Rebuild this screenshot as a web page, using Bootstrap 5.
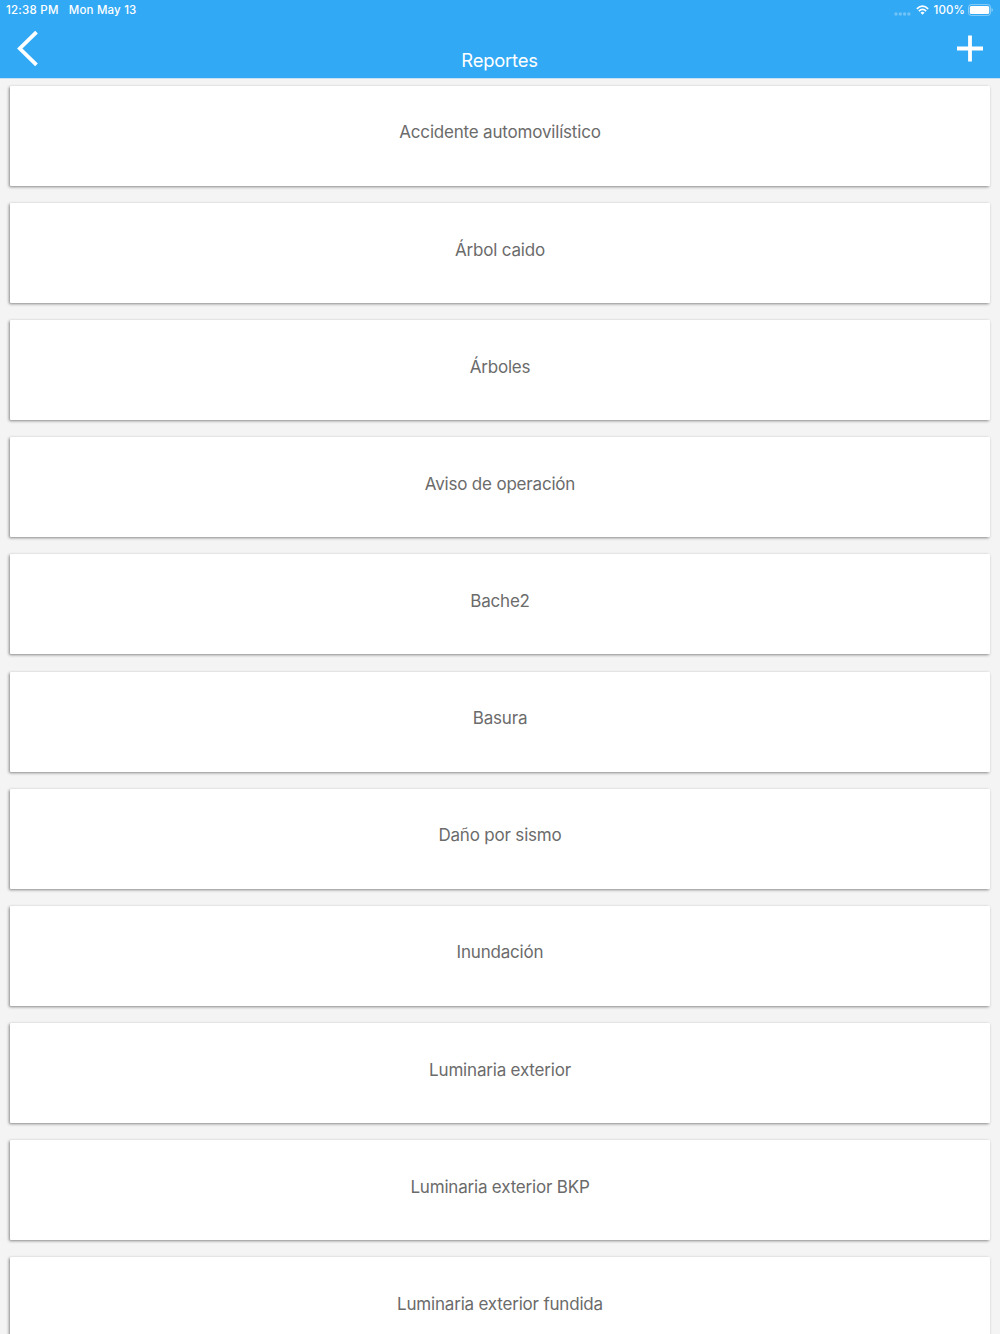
<!DOCTYPE html>
<html lang="es">
<head>
<meta charset="utf-8">
<meta name="viewport" content="width=device-width, initial-scale=1">
<title>Reportes</title>
<link href="https://cdn.jsdelivr.net/npm/bootstrap@5.3.0/dist/css/bootstrap.min.css" rel="stylesheet">
<style>
body{font-family:Inter,"Liberation Sans",sans-serif;background:#f4f4f4;height:1334px;overflow:hidden}
.app-header{background:#32a9f4;height:78px;box-shadow:0 1px 0 #c4e1f4}
.status-bar{height:20px;padding:0 7px 0 6px;font-size:11.5px;font-weight:500;line-height:20px;letter-spacing:.25px}
.date{margin-left:10px;letter-spacing:.18px}
.signal-dots{margin-right:5px}
.battery-text{margin:0 3px 0 5px;letter-spacing:.1px}
.title-bar{height:58px;padding:0 17px}
.page-title{font-size:18.4px;line-height:24px;font-weight:400;letter-spacing:-.22px;padding:20px 0 0 3px}
.report-list{padding:7.8px 10px 0;gap:17.15px}
.report-card{height:100px;flex:none;border:0;border-radius:1px;color:#6b6b6b;font-size:17px;line-height:24px;padding-top:34.6px;letter-spacing:-.19px;box-shadow:-1px 1px 3px rgba(0,0,0,.45)}
</style>
</head>
<body>
<header class="app-header text-white">
  <div class="status-bar d-flex justify-content-between">
    <div class="d-flex"><span class="clock">12:38 PM</span><span class="date">Mon May 13</span></div>
    <div class="d-flex align-items-center">
      <svg class="signal-dots mt-2" width="17" height="4" viewBox="0 0 17 4" fill="#fff" opacity=".3"><circle cx="2" cy="2" r="1.7"/><circle cx="6.3" cy="2" r="1.7"/><circle cx="10.6" cy="2" r="1.7"/><circle cx="14.9" cy="2" r="1.7"/></svg>
      <svg width="13" height="10" viewBox="0 0 14 11" fill="none" stroke="#fff" stroke-width="1.9"><path d="M.8 4.2Q7-1.8 13.2 4.2M3 6.7Q7 3 11 6.7"/><path d="M4.8 8.4Q7 6.5 9.2 8.4L7 10.6Z" fill="#fff" stroke="none"/></svg>
      <span class="battery-text">100%</span>
      <svg width="25" height="12" viewBox="0 0 25 12"><rect x=".5" y=".5" width="22" height="11" rx="2.8" fill="none" stroke="#fff" stroke-opacity=".4"/><rect x="1.8" y="2" width="19.4" height="8" rx="1.5" fill="#fff"/><path d="M23.5 4q1.5.6 1.5 2T23.5 8z" fill="#fff" opacity=".4"/></svg>
    </div>
  </div>
  <div class="title-bar d-flex justify-content-between">
    <svg class="mt-2" width="22" height="40" viewBox="0 0 22 40" fill="none" stroke="#fff" stroke-width="3.8"><path d="M19.5 4.1 2.8 20.5 19.5 36.9"/></svg>
    <h1 class="page-title m-0 mt-2">Reportes</h1>
    <svg class="mt-2" width="26" height="40" viewBox="0 0 26 40" stroke="#fff" stroke-width="3.8"><path d="M0 20.5H26M13 7.5V33.5"/></svg>
  </div>
</header>
<main class="report-list d-flex flex-column">
  <div class="card report-card text-center"><span>Accidente automovilístico</span></div>
  <div class="card report-card text-center"><span>Árbol caido</span></div>
  <div class="card report-card text-center"><span>Árboles</span></div>
  <div class="card report-card text-center"><span>Aviso de operación</span></div>
  <div class="card report-card text-center"><span>Bache2</span></div>
  <div class="card report-card text-center"><span>Basura</span></div>
  <div class="card report-card text-center"><span>Daño por sismo</span></div>
  <div class="card report-card text-center"><span>Inundación</span></div>
  <div class="card report-card text-center"><span>Luminaria exterior</span></div>
  <div class="card report-card text-center"><span>Luminaria exterior BKP</span></div>
  <div class="card report-card text-center"><span>Luminaria exterior fundida</span></div>
</main>
<script src="https://cdn.jsdelivr.net/npm/bootstrap@5.3.0/dist/js/bootstrap.bundle.min.js"></script>
</body>
</html>
